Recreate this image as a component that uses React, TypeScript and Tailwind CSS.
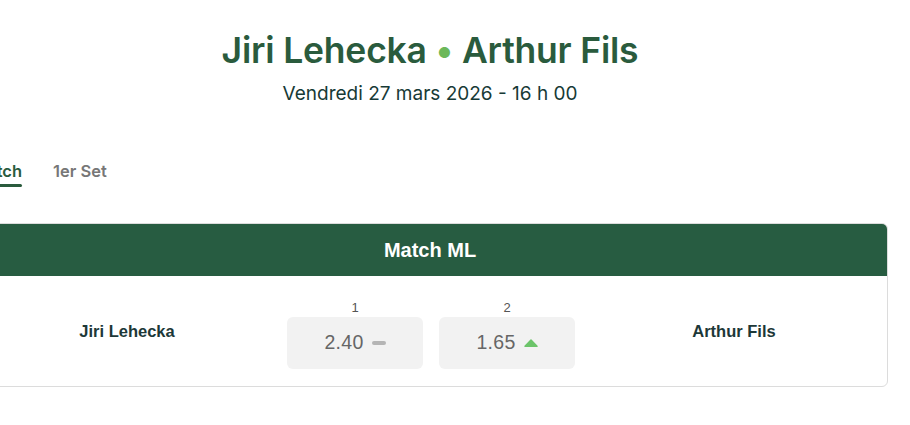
import React from 'react'

function OddButton({ label, value, trend }: { label: string; value: string; trend: 'flat' | 'up' }) {
  return (
    <div className="flex flex-col items-center">
      <div className="h-[19px] flex items-center text-[13px] text-[#555]">{label}</div>
      <button className="w-[136px] h-[52px] rounded-[6px] bg-[#f2f2f2] flex items-center justify-center gap-[8px] text-[19.5px] text-[#666] tracking-[0.3px]">
        <span>{value}</span>
        {trend === 'flat' ? (
          <span className="block w-[14px] h-[4px] rounded-full bg-[#b5b5b5]" />
        ) : (
          <svg width="14" height="8" viewBox="0 0 14 8">
            <path d="M7 1 L13 7.2 L1 7.2 Z" fill="#6cc46a" strokeLinejoin="round" stroke="#6cc46a" strokeWidth="1.5" />
          </svg>
        )}
      </button>
    </div>
  )
}

export default function App() {
  return (
    <main className="min-h-screen bg-white overflow-hidden font-['Inter',sans-serif]">
      <div className="w-[916px] ml-[-28px]">
        <header className="pt-[28px] text-center">
          <h1 className="text-[35.5px] leading-[46px] font-semibold text-[#2a5b3d] tracking-[-0.2px]">
            Jiri Lehecka <span className="text-[#6cb85a]">•</span> Arthur Fils
          </h1>
          <p className="mt-[8px] text-[19px] leading-[24px] text-[#173a36]">Vendredi 27 mars 2026 - 16 h 00</p>
        </header>

        <nav className="mt-[55px] flex gap-[31px]">
          <div className="flex flex-col items-start">
            <span className="text-[16.5px] font-semibold text-[#2a5b3d] leading-[20px]">Match</span>
            <span className="mt-[3px] block h-[3px] w-full bg-[#2a5b3d] rounded-full" />
          </div>
          <div className="text-[16.5px] font-semibold text-[#777] leading-[20px]">1er Set</div>
        </nav>

        <section className="mt-[36px] rounded-[6px] border border-[#dcdcdc] overflow-hidden">
          <div className="h-[52px] bg-[#275c41] flex items-center justify-center text-white text-[20px] font-bold font-['Liberation_Sans',sans-serif]">
            Match ML
          </div>
          <div className="h-[110px] flex items-start font-['Liberation_Sans',sans-serif]">
            <div className="w-[308px] h-full flex items-center justify-center text-[16.5px] font-bold text-[#1d3838]">
              Jiri Lehecka
            </div>
            <div className="ml-[6px] pt-[22px] flex gap-[16px]">
              <OddButton label="1" value="2.40" trend="flat" />
              <OddButton label="2" value="1.65" trend="up" />
            </div>
            <div className="ml-[6px] flex-1 h-full flex items-center justify-center text-[16.5px] font-bold text-[#1d3838]">
              Arthur Fils
            </div>
          </div>
        </section>
      </div>
    </main>
  )
}
